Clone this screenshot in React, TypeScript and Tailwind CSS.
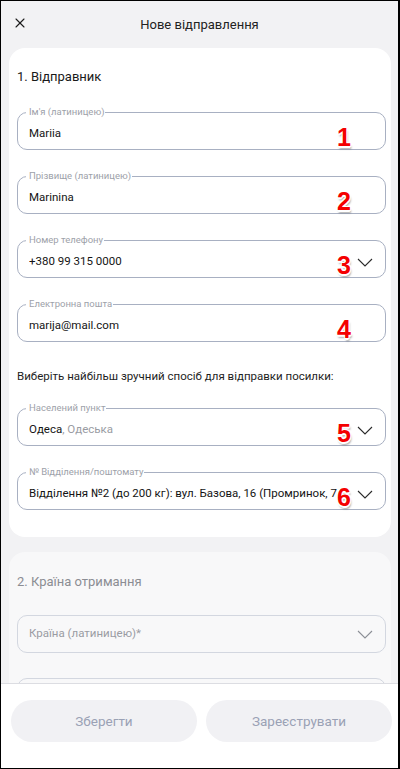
import { X } from "lucide-react"

interface FieldProps {
    label?: string
    value?: React.ReactNode
    placeholder?: string
    mark?: string
    select?: boolean
    faded?: boolean
}

function Chevron({ faded }: { faded?: boolean }) {
    return (
        <svg width="16" height="9" viewBox="0 0 16 9" className="shrink-0 ml-2">
            <polyline points="1,1 8,8 15,1" fill="none" stroke={faded ? '#8c8f96' : '#2a2a2a'} strokeWidth="1.1" />
        </svg>
    )
}

function Field({ label, value, placeholder, mark, select, faded }: FieldProps) {
    return (
        <fieldset className={`relative min-w-0 rounded-[10px] border pl-2 pr-[12px] ${faded ? 'border-[#d3d7e0]' : 'border-[#a8b0c2]'}`}>
            {label && (
                <legend className="pl-[3px] pr-[1px] text-[9.5px] leading-[14px] text-[#9da1a9]">
                    {label}
                </legend>
            )}
            <div className={`flex items-center pl-[3px] ${label ? 'h-[30px]' : 'h-[36px]'}`}>
                <div className="flex-1 min-w-0 truncate text-[11.5px] text-[#141414]">
                    {value ?? <span className="text-[#9a9ca3]">{placeholder}</span>}
                </div>
                {select && <Chevron faded={faded} />}
            </div>
            {mark && (
                <span className="absolute right-[34px] top-[3px] font-['Liberation_Sans',sans-serif] text-[25px] font-bold leading-[30px] text-[#f40000] [text-shadow:-1px_-1px_0_#fff,1px_-1px_0_#fff,-1px_1px_0_#fff,1px_1px_0_#fff,0_2px_0_#fff,1px_3px_2px_rgba(0,0,0,0.35)]">
                    {mark}
                </span>
            )}
        </fieldset>
    )
}

export default function App() {
    return (
        <div className="w-[400px] h-[769px] flex flex-col overflow-hidden border border-r-2 border-black bg-[#f2f2f4] font-['Roboto',sans-serif]">
            <div className="h-[47px] shrink-0 relative flex items-center justify-center">
                <X size={16} strokeWidth={1.6} className="absolute left-[11px] top-[14px] text-[#1b1b1b]" />
                <span className="text-[13px] text-[#222]">Нове відправлення</span>
            </div>

            <div className="flex-1 overflow-hidden pl-2 pr-[7px]">
                <div className="rounded-2xl bg-white pl-2 pr-[5px] pt-[19px] pb-[27px]">
                    <div className="text-[13px] leading-[20px] text-[#1a1a1a]">1. Відправник</div>
                    <div className="mt-[18px] flex flex-col gap-[19px]">
                        <Field label="Ім'я (латиницею)" value="Mariia" mark="1" />
                        <Field label="Прізвище (латиницею)" value="Marinina" mark="2" />
                        <Field label="Номер телефону" value="+380 99 315 0000" mark="3" select />
                        <Field label="Електронна пошта" value="marija@mail.com" mark="4" />
                    </div>
                    <div className="mt-[24px] text-[11.5px] leading-[20px] text-[#1e1e1e]">
                        Виберіть найбільш зручний спосіб для відправки посилки:
                    </div>
                    <div className="mt-[15px] flex flex-col gap-[19px]">
                        <Field
                            label="Населений пункт"
                            value={<>Одеса<span className="text-[#9a9ca3]">, Одеська</span></>}
                            mark="5"
                            select
                        />
                        <Field
                            label="№ Відділення/поштомату"
                            value="Відділення №2 (до 200 кг): вул. Базова, 16 (Промринок, 7 км)"
                            mark="6"
                            select
                        />
                    </div>
                </div>

                <div className="mt-[15px] rounded-2xl bg-[#f8f8f9] pl-2 pr-[5px] pt-[20px] pb-6">
                    <div className="text-[13px] leading-[20px] text-[#8b8d93]">2. Країна отримання</div>
                    <div className="mt-[23px] flex flex-col gap-[25px]">
                        <Field placeholder="Країна (латиницею)*" select faded />
                        <Field placeholder="Місто" faded />
                    </div>
                </div>
            </div>

            <div className="h-[85px] shrink-0 border-t border-[#dcdde2] bg-white pl-[10px] pr-[6px] pt-4 flex gap-[9px]">
                <button className="flex-1 h-[42px] rounded-full bg-[#f1f1f4] text-[13.5px] text-[#9aa1b5]">Зберегти</button>
                <button className="flex-1 h-[42px] rounded-full bg-[#f1f1f4] text-[13.5px] text-[#9aa1b5]">Зареєструвати</button>
            </div>
        </div>
    )
}
